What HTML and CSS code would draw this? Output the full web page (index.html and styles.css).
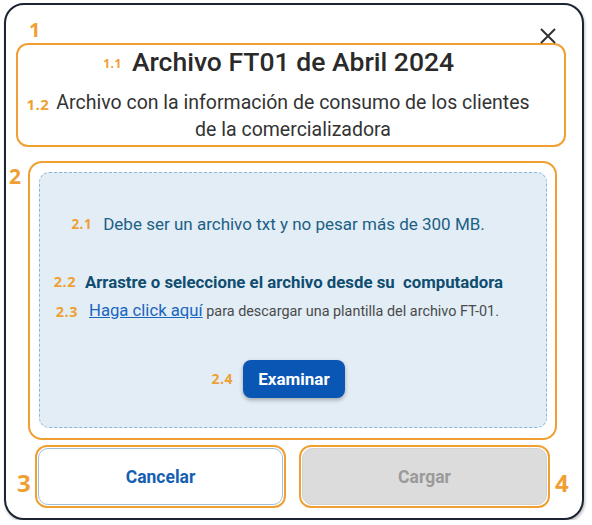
FILE: index.html
```html
<!DOCTYPE html>
<html lang="es">
<head>
<meta charset="utf-8">
<title>Archivo FT01</title>
<link rel="stylesheet" href="styles.css">
</head>
<body>
<div class="dialog">
  <span class="anno anno-1">1</span>
  <span class="anno anno-2">2</span>
  <span class="anno anno-3">3</span>
  <span class="anno anno-4">4</span>
  <button class="close" aria-label="Cerrar">
    <svg width="16" height="16" viewBox="0 0 16 16"><path d="M1 1L15 15M15 1L1 15" stroke="#333" stroke-width="2" fill="none"/></svg>
  </button>

  <section class="header">
    <h1 class="title"><span class="tag tag-11">1.1</span>Archivo FT01 de Abril 2024</h1>
    <p class="subtitle"><span class="line"><span class="tag tag-12">1.2</span>Archivo con la información de consumo de los clientes</span><br>de la comercializadora</p>
  </section>

  <section class="upload">
    <div class="dropzone">
      <p class="info"><span class="tag tag-21">2.1</span>Debe ser un archivo txt y no pesar más de 300 MB.</p>
      <p class="drag"><span class="tag tag-22">2.2</span>Arrastre o seleccione el archivo desde su&nbsp; computadora</p>
      <p class="template"><span class="tag tag-23">2.3</span><a href="#" class="link">Haga click aquí</a> para descargar una plantilla del archivo FT-01.</p>
      <div class="browse-row"><span class="btn-wrap"><span class="tag tag-24">2.4</span><button class="browse">Examinar</button></span></div>
    </div>
  </section>

  <footer class="actions">
    <div class="act-box"><button class="btn cancel">Cancelar</button></div>
    <div class="act-box"><button class="btn load" disabled>Cargar</button></div>
  </footer>
</div>
</body>
</html>
```

FILE: styles.css
```css
* { box-sizing: border-box; }
html, body { margin: 0; padding: 0; background: #ffffff; }
body { font-family: Roboto, "Noto Sans", Arial, sans-serif; }

.dialog {
  position: relative;
  margin: 3px 0 0 4px;
  width: 580px;
  height: 517px;
  border: 2px solid #1c2434;
  border-radius: 20px;
  background: #fff;
  box-shadow: 1px 2px 3px rgba(0,0,0,0.25);
  padding: 38px 0 0 10px;
  display: flex;
  flex-direction: column;
}

.anno {
  position: absolute;
  color: #f0a033;
  font-family: "Open Sans", Roboto, sans-serif;
  font-weight: 700;
  line-height: 1;
}
.anno-1 { left: 23px; top: 15px; font-size: 20px; }
.anno-2 { left: 3px; top: 161px; font-size: 21px; }
.anno-3 { left: 11px; top: 466px; font-size: 24px; }
.anno-4 { left: 549px; top: 466px; font-size: 24px; }

.close {
  position: absolute;
  left: 533px;
  top: 22px;
  width: 18px;
  height: 18px;
  padding: 1px;
  border: 0;
  background: none;
}
.close svg { display: block; }

.tag {
  position: absolute;
  right: 100%;
  color: #f0a033;
  font-family: "Open Sans", Roboto, sans-serif;
  font-weight: 700;
  white-space: nowrap;
  text-decoration: none;
  line-height: 1;
  letter-spacing: 0.5px;
}

.header {
  width: 550px;
  height: 104px;
  border: 2px solid #f0a033;
  border-radius: 12px;
  text-align: center;
  padding-top: 0;
}
.title {
  position: relative;
  display: inline-block;
  margin: 0 0 0 4px;
  font-size: 26.5px;
  font-weight: 500;
  color: #2a2a2a;
  line-height: 34px;
}
.tag-11 { font-size: 12px; margin-right: 10px; top: 13px; }
.subtitle {
  margin: 10px 0 0 4px;
  font-size: 19.5px;
  line-height: 27px;
  color: #333;
}
.subtitle .line { position: relative; }
.tag-12 { font-size: 15px; margin-right: 7px; top: 6px; }

.upload {
  margin: 14px 0 0 12px;
  width: 529px;
  height: 279px;
  border: 2px solid #f0a033;
  border-radius: 14px;
  padding: 9px 8px 10px 9px;
}
.dropzone {
  height: 100%;
  background: #e2edf6;
  border: 1px dashed #86b6d9;
  border-radius: 10px;
  display: flex;
  flex-direction: column;
  align-items: center;
  padding-top: 40px;
  padding-left: 2px;
}
.dropzone p { margin: 0; position: relative; line-height: 22px; }
.info { font-size: 17px; color: #1d5f85; }
.tag-21 { font-size: 13.5px; margin-right: 11px; top: 5px; }
.drag { margin-top: 36px !important; font-size: 16.8px; font-weight: 700; color: #104d70; }
.tag-22 { font-size: 14.5px; margin-right: 9px; top: 4px; }
.template { margin-top: 7px !important; font-size: 14.4px; color: #4a4a4a; }
.link { font-size: 16.7px; color: #1a66bf; text-decoration: underline; }
.tag-23 { font-size: 14.5px; margin-right: 11px; top: 5px; }

.browse-row { margin-top: 37px; }
.btn-wrap { position: relative; display: inline-block; }
.tag-24 { font-size: 14px; margin-right: 10px; top: 12px; }
.browse {
  display: block;
  width: 102px;
  height: 38px;
  border: 0;
  border-radius: 8px;
  background: #0a56b4;
  color: #fff;
  font-family: Roboto, sans-serif;
  font-size: 17px;
  font-weight: 700;
  box-shadow: 0 2px 4px rgba(0,0,0,0.3);
}

.actions {
  display: flex;
  gap: 13px;
  margin: 5px 0 0 19px;
}
.act-box {
  width: 251px;
  height: 63px;
  border: 2px solid #f0a033;
  border-radius: 12px;
  padding: 1px;
}
.btn {
  display: block;
  width: 100%;
  height: 100%;
  border-radius: 10px;
  font-family: Roboto, sans-serif;
  font-size: 17.5px;
  font-weight: 700;
}
.cancel {
  background: #fff;
  border: 1px solid #9cc1e0;
  color: #1660b3;
}
.load {
  background: #dcdcdc;
  border: 1px solid #d4d4d4;
  color: #9a9a9a;
}
```
